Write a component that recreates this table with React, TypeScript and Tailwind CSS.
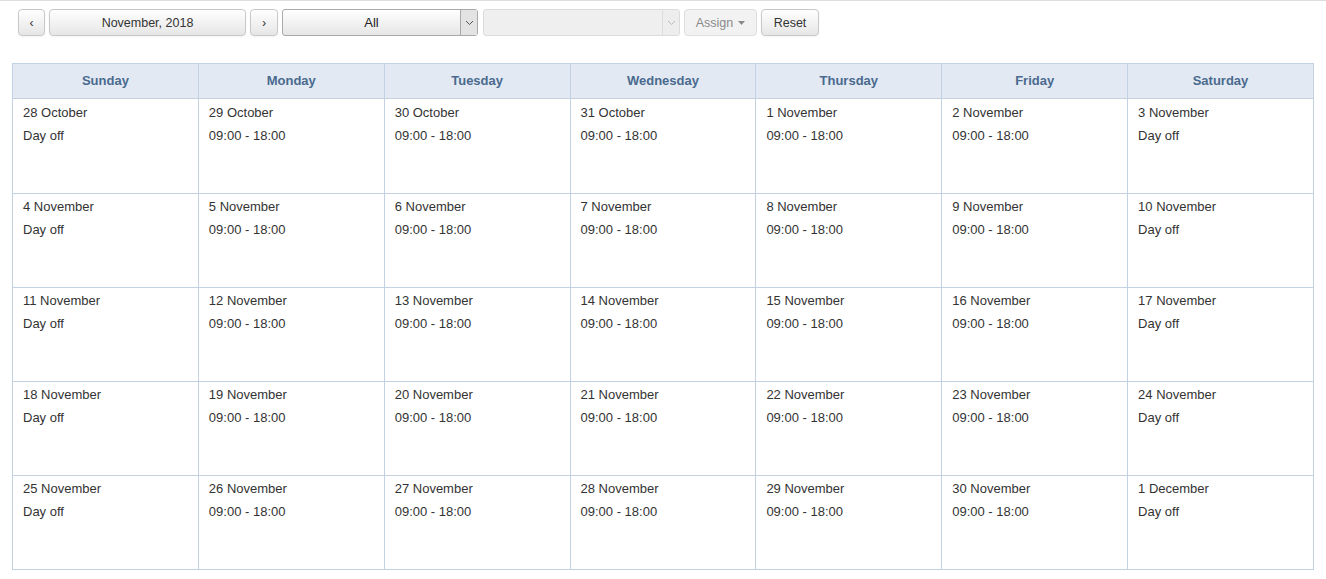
import React from "react";

const days = ["Sunday", "Monday", "Tuesday", "Wednesday", "Thursday", "Friday", "Saturday"];

type Cell = { d: string; off: boolean };

function buildWeeks(): Cell[][] {
  const cells: Cell[] = [];
  const oct = [28, 29, 30, 31];
  oct.forEach((n) => cells.push({ d: `${n} October`, off: false }));
  for (let i = 1; i <= 30; i++) cells.push({ d: `${i} November`, off: false });
  cells.push({ d: "1 December", off: false });
  cells.forEach((c, i) => {
    const wd = i % 7;
    c.off = wd === 0 || wd === 6;
  });
  const weeks: Cell[][] = [];
  for (let i = 0; i < cells.length; i += 7) weeks.push(cells.slice(i, i + 7));
  return weeks;
}

const btn =
  "h-[27px] pt-[1px] rounded-[4px] border border-[#c8c8c8] bg-gradient-to-b from-white to-[#e6e6e6] text-[12.5px] text-[#333] flex items-center justify-center shadow-[inset_0_1px_0_rgba(255,255,255,0.2),0_1px_2px_rgba(0,0,0,0.05)]";

function Chevron({ color }: { color: string }) {
  return (
    <svg width="9" height="6" viewBox="0 0 9 6">
      <path d="M1 1 L4.5 4.5 L8 1" fill="none" stroke={color} strokeWidth="1" />
    </svg>
  );
}

export default function App() {
  const weeks = buildWeeks();
  return (
    <div
      className="w-[1326px] h-[579px] bg-white border-t border-[#dddddd] overflow-hidden"
      style={{ fontFamily: '"Liberation Sans", Arial, sans-serif' }}
    >
      <div className="flex items-center gap-[4px] pl-[18px] pt-[8px]">
        <div className={`${btn} w-[27px]`}>‹</div>
        <div className={`${btn} w-[197px]`}>November, 2018</div>
        <div className={`${btn} w-[28px]`}>›</div>
        <div className="h-[27px] w-[196px] rounded-[3px] border border-[#a9a9a9] bg-gradient-to-b from-white to-[#e6e6e6] flex items-center">
          <div className="flex-1 pt-[1px] text-center text-[13px] text-[#222]">All</div>
          <div className="w-[17px] h-full border-l border-[#a9a9a9] bg-[#e3e3e3] flex items-center justify-center">
            <Chevron color="#555" />
          </div>
        </div>
        <div className="ml-[1px] h-[27px] w-[197px] rounded-[3px] border border-[#dcdcdc] bg-[#efefef] flex items-center justify-end">
          <div className="w-[17px] h-full border-l border-[#dcdcdc] bg-[#ededed] flex items-center justify-center">
            <Chevron color="#bbb" />
          </div>
        </div>
        <div className="h-[27px] pt-[1px] w-[73px] rounded-[4px] border border-[#dedede] bg-[#f2f2f2] text-[12.5px] text-[#8a8a8a] flex items-center justify-center gap-[5px]">
          Assign
          <svg width="7" height="4" viewBox="0 0 7 4">
            <path d="M0 0 L7 0 L3.5 4 Z" fill="#8a8a8a" />
          </svg>
        </div>
        <div className={`${btn} w-[58px]`}>Reset</div>
      </div>

      <div className="pl-[12px] pt-[27px]">
        <table className="w-[1302px] border-collapse table-fixed">
          <thead>
            <tr className="h-[35px] bg-[#e2e9f3]">
              {days.map((d) => (
                <th
                  key={d}
                  className="border border-[#c3d2e3] text-[13px] font-bold text-[#4a6a8e] text-center align-middle p-0"
                >
                  {d}
                </th>
              ))}
            </tr>
          </thead>
          <tbody>
            {weeks.map((w, i) => (
              <tr key={i} className={i === 0 ? "h-[95px]" : "h-[94px]"}>
                {w.map((c) => (
                  <td
                    key={c.d}
                    className={`border border-[#c3d2e3] align-top pl-[10px] ${
                      i === 0 ? "pt-[2px]" : "pt-[1px]"
                    } text-[13px] text-[#333] leading-[23px]`}
                  >
                    <div>{c.d}</div>
                    <div>{c.off ? "Day off" : "09:00 - 18:00"}</div>
                  </td>
                ))}
              </tr>
            ))}
          </tbody>
        </table>
      </div>
    </div>
  );
}
